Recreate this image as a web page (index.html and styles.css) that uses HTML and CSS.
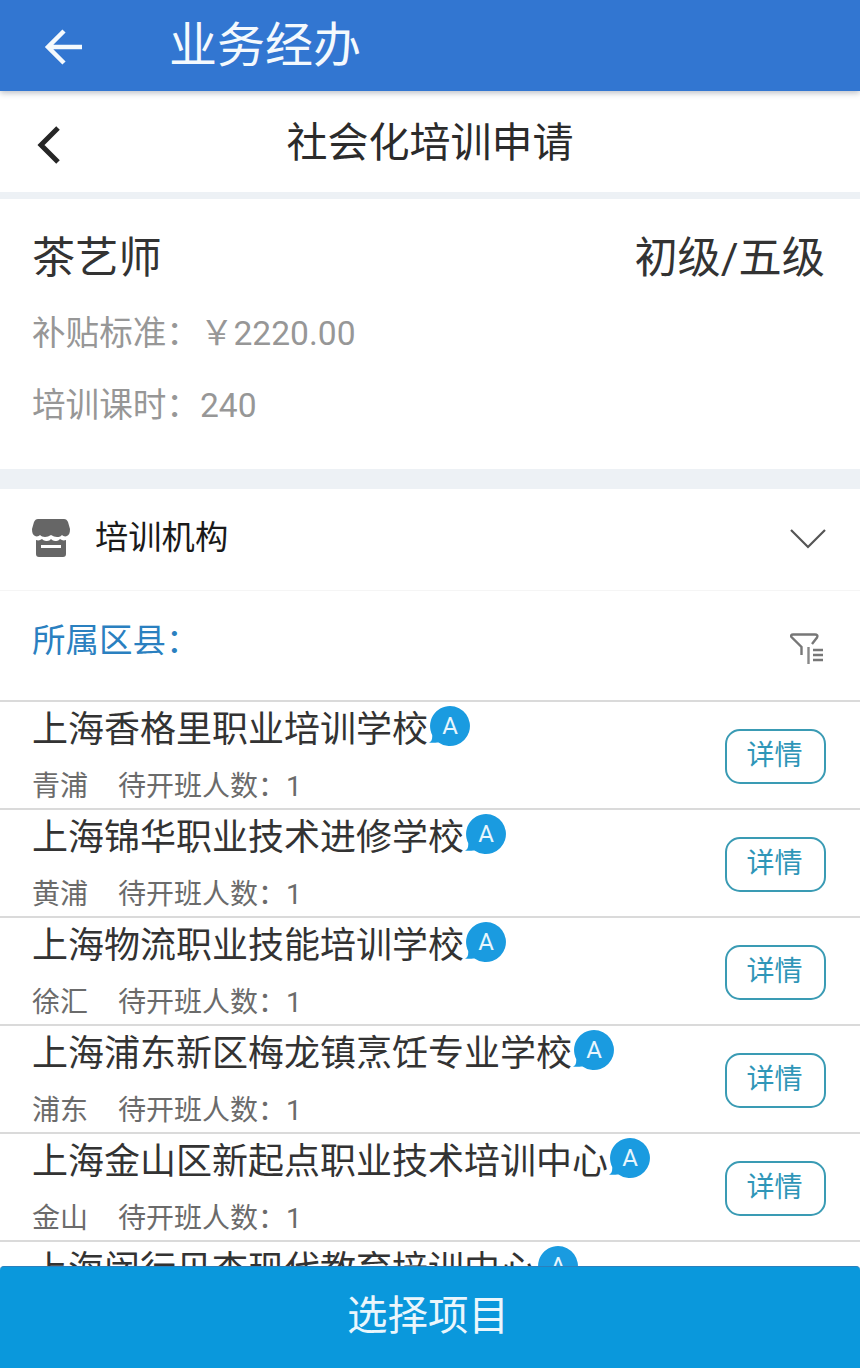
FILE: index.html
```html
<!DOCTYPE html>
<html lang="zh-CN">
<head>
  <meta charset="UTF-8" />
  <meta name="viewport" content="width=device-width, initial-scale=1.0" />
  <title>业务经办</title>
  <link rel="stylesheet" href="styles.css">
</head>
<body>
  <div class="app">
    <header class="top-bar">
      <svg class="top-back" viewBox="0 0 40 40" width="40" height="40">
        <path d="M38 21H4M20 5L4 21l16 16" fill="none" stroke="#f4f9fd" stroke-width="4.5"/>
      </svg>
      <span class="top-title">业务经办</span>
    </header>

    <div class="sub-bar">
      <svg class="sub-back" viewBox="0 0 26 40" width="26" height="40">
        <path d="M22 3L5 20l17 17" fill="none" stroke="#262626" stroke-width="5"/>
      </svg>
      <h1 class="sub-title">社会化培训申请</h1>
    </div>

    <section class="job">
      <div class="job-head">
        <span>茶艺师</span>
        <span>初级/五级</span>
      </div>
      <p class="job-line job-subsidy">补贴标准：￥2220.00</p>
      <p class="job-line job-hours">培训课时：240</p>
    </section>

    <div class="org-head">
      <svg class="org-icon" viewBox="0 0 38 38" width="38" height="38">
        <path d="M6 0h26c2 0 3 1 4 3l2 7c0 4-1 6-3 7-2 1-4 0-5-1-2 2-3 2-5 2-2 0-4-1-6-2-2 1-4 2-6 2-2 0-4-1-5-2-1 1-3 2-5 1-2-1-3-3-3-7l2-7c1-2 2-3 4-3z" fill="#666"/>
        <path d="M4 21c3 1 4 0 6-1 2 2 4 2 5 2 2 0 3-1 4-2 1 1 3 2 4 2 2 0 3 0 5-2 2 1 3 2 6 1v14c0 2-1 3-3 3H7c-2 0-3-1-3-3z" fill="#666"/>
        <rect class="org-slot" x="9" y="26" width="20" height="3"/>
      </svg>
      <span class="org-title">培训机构</span>
      <svg class="org-arrow" viewBox="0 0 36 22" width="36" height="22">
        <path d="M1 2l17 17L35 2" fill="none" stroke="#555" stroke-width="2.2"/>
      </svg>
    </div>

    <div class="filter-row">
      <span class="filter-label">所属区县：</span>
      <svg class="filter-icon" viewBox="0 0 34 32" width="34" height="32">
        <path d="M11.500 22V14L1.500 4C0.500 2.500 1.500 1.500 3 1.500h22c2 0 3 1 2 3l-5 6.500" fill="none" stroke="#777" stroke-width="2.400"/>
        <path d="M18.500 14v17" fill="none" stroke="#888" stroke-width="2.400"/>
        <path d="M23 17h10M23 22h10M23 27h10" fill="none" stroke="#777" stroke-width="2.400"/>
      </svg>
    </div>

    <ul class="org-list">
      <li class="org-item">
        <div class="org-info">
          <div class="org-name">上海香格里职业培训学校<svg class="badge" viewBox="0 0 42 42" width="42" height="42"><path d="M22 1a20 20 0 1 1-11.500 36.400C8 37.500 4 38 1 37.500c2.500-1 3.500-3 3.200-7.500A20 20 0 0 1 22 1z" fill="#1a9be0"/><text x="22" y="29" text-anchor="middle">A</text></svg></div>
          <div class="org-meta"><span class="org-area">青浦</span>待开班人数：1</div>
        </div>
        <button class="detail-btn">详情</button>
      </li>
      <li class="org-item">
        <div class="org-info">
          <div class="org-name">上海锦华职业技术进修学校<svg class="badge" viewBox="0 0 42 42" width="42" height="42"><path d="M22 1a20 20 0 1 1-11.500 36.400C8 37.500 4 38 1 37.500c2.500-1 3.500-3 3.200-7.500A20 20 0 0 1 22 1z" fill="#1a9be0"/><text x="22" y="29" text-anchor="middle">A</text></svg></div>
          <div class="org-meta"><span class="org-area">黄浦</span>待开班人数：1</div>
        </div>
        <button class="detail-btn">详情</button>
      </li>
      <li class="org-item">
        <div class="org-info">
          <div class="org-name">上海物流职业技能培训学校<svg class="badge" viewBox="0 0 42 42" width="42" height="42"><path d="M22 1a20 20 0 1 1-11.500 36.400C8 37.500 4 38 1 37.500c2.500-1 3.500-3 3.200-7.500A20 20 0 0 1 22 1z" fill="#1a9be0"/><text x="22" y="29" text-anchor="middle">A</text></svg></div>
          <div class="org-meta"><span class="org-area">徐汇</span>待开班人数：1</div>
        </div>
        <button class="detail-btn">详情</button>
      </li>
      <li class="org-item">
        <div class="org-info">
          <div class="org-name">上海浦东新区梅龙镇烹饪专业学校<svg class="badge" viewBox="0 0 42 42" width="42" height="42"><path d="M22 1a20 20 0 1 1-11.500 36.400C8 37.500 4 38 1 37.500c2.500-1 3.500-3 3.200-7.500A20 20 0 0 1 22 1z" fill="#1a9be0"/><text x="22" y="29" text-anchor="middle">A</text></svg></div>
          <div class="org-meta"><span class="org-area">浦东</span>待开班人数：1</div>
        </div>
        <button class="detail-btn">详情</button>
      </li>
      <li class="org-item">
        <div class="org-info">
          <div class="org-name">上海金山区新起点职业技术培训中心<svg class="badge" viewBox="0 0 42 42" width="42" height="42"><path d="M22 1a20 20 0 1 1-11.500 36.400C8 37.500 4 38 1 37.500c2.500-1 3.500-3 3.200-7.500A20 20 0 0 1 22 1z" fill="#1a9be0"/><text x="22" y="29" text-anchor="middle">A</text></svg></div>
          <div class="org-meta"><span class="org-area">金山</span>待开班人数：1</div>
        </div>
        <button class="detail-btn">详情</button>
      </li>
      <li class="org-item">
        <div class="org-info">
          <div class="org-name">上海闵行贝杏现代教育培训中心<svg class="badge" viewBox="0 0 42 42" width="42" height="42"><path d="M22 1a20 20 0 1 1-11.500 36.400C8 37.500 4 38 1 37.500c2.500-1 3.500-3 3.200-7.500A20 20 0 0 1 22 1z" fill="#1a9be0"/><text x="22" y="29" text-anchor="middle">A</text></svg></div>
        </div>
      </li>
    </ul>

    <button class="select-btn">选择项目</button>
  </div>
</body>
</html>
```

FILE: styles.css
```css
* {
  margin: 0;
  padding: 0;
  box-sizing: border-box;
  font-family: Roboto, 'Noto Sans CJK SC', sans-serif;
}

body {
  background: #fff;
  overflow: hidden;
}

.app {
  height: 1368px;
  display: flex;
  flex-direction: column;
}

.top-bar {
  flex: none;
  height: 91px;
  background: #3276d1;
  display: flex;
  align-items: center;
  padding-left: 44px;
  box-shadow: 0 2px 6px rgba(60, 70, 90, 0.35);
  position: relative;
}

.top-title {
  margin-left: 85px;
  font-size: 48px;
  line-height: 91px;
  color: #f4f9fd;
}

.sub-bar {
  flex: none;
  height: 108px;
  padding-bottom: 6px;
  border-bottom: 7px solid #edf1f5;
  display: flex;
  align-items: center;
  justify-content: center;
  position: relative;
}

.sub-back {
  position: absolute;
  left: 36px;
  top: 34px;
}

.sub-title {
  font-size: 41px;
  font-weight: 400;
  color: #2b2b2b;
}

.job {
  flex: none;
  height: 290px;
  padding: 30px 35px 0 32px;
  border-bottom: 20px solid #edf1f5;
}

.job-head {
  display: flex;
  justify-content: space-between;
  font-size: 43.200px;
  line-height: 60px;
  color: #333;
}

.job-line {
  font-size: 33.600px;
  line-height: 48px;
  color: #979797;
}

.job-subsidy {
  margin-top: 21px;
}

.job-hours {
  margin-top: 24px;
}

.org-head {
  flex: none;
  height: 102px;
  padding: 0 34px 4px 32px;
  display: flex;
  align-items: center;
  border-bottom: 1px solid #f5f5f5;
}

.org-slot {
  fill: #fff;
}

.org-title {
  margin: 0 0 6px 25px;
  font-size: 33.300px;
  color: #1a1a1a;
}

.org-arrow {
  margin: 2px 0 0 auto;
}

.filter-row {
  flex: none;
  height: 109px;
  padding: 26px 36px 0 32px;
  display: flex;
  justify-content: space-between;
}

.filter-label {
  font-size: 33.500px;
  line-height: 48px;
  color: #2a80c0;
}

.filter-icon {
  margin-top: 16px;
}

.org-list {
  flex: 1;
  min-height: 0;
  overflow: hidden;
  list-style: none;
}

.org-item {
  height: 108px;
  padding: 0 34px 0 32px;
  border-top: 2px solid #dadada;
  display: flex;
  justify-content: space-between;
}

.org-name {
  display: flex;
  align-items: flex-start;
  height: 55px;
  font-size: 36px;
  line-height: 56px;
  color: #333;
}

.badge {
  margin-top: 3px;
  flex: none;
}

.badge text {
  font-size: 24px;
  fill: #e8f6fd;
}

.org-meta {
  margin-top: 8px;
  font-size: 28px;
  line-height: 44px;
  color: #6b6b6b;
}

.org-area {
  margin-right: 30px;
}

.detail-btn {
  flex: none;
  align-self: flex-start;
  margin-top: 27px;
  width: 101px;
  height: 55px;
  padding: 0 2px 7px 0;
  background: #fff;
  border: 2.500px solid #3a9bb4;
  border-radius: 15px;
  font-size: 28px;
  color: #2f96b8;
}

.select-btn {
  flex: none;
  height: 102px;
  padding: 0 4px 11px 0;
  border: none;
  border-top: 1px solid #2a80bd;
  border-radius: 4px 4px 0 0;
  background: #0a98dc;
  font-size: 40.500px;
  color: #eaf6fc;
}
```
